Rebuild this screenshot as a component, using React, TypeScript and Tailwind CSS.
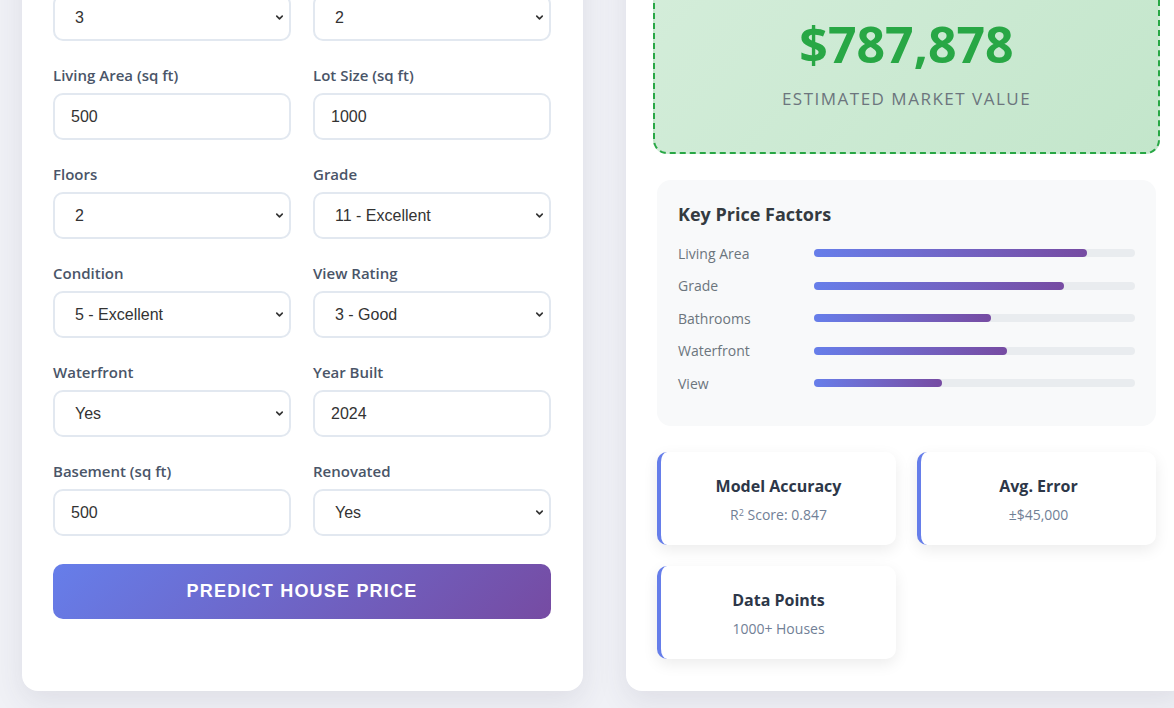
import React from "react";
import { ChevronDown } from "lucide-react";

type Field = {
  label?: string;
  value: string;
  kind: "select" | "input";
};

// first row sits above the fold, only its controls are in view
const rows: Field[][] = [
  [
    { value: "3", kind: "select" },
    { value: "2", kind: "select" },
  ],
  [
    { label: "Living Area (sq ft)", value: "500", kind: "input" },
    { label: "Lot Size (sq ft)", value: "1000", kind: "input" },
  ],
  [
    { label: "Floors", value: "2", kind: "select" },
    { label: "Grade", value: "11 - Excellent", kind: "select" },
  ],
  [
    { label: "Condition", value: "5 - Excellent", kind: "select" },
    { label: "View Rating", value: "3 - Good", kind: "select" },
  ],
  [
    { label: "Waterfront", value: "Yes", kind: "select" },
    { label: "Year Built", value: "2024", kind: "input" },
  ],
  [
    { label: "Basement (sq ft)", value: "500", kind: "input" },
    { label: "Renovated", value: "Yes", kind: "select" },
  ],
];

const factors = [
  { name: "Living Area", pct: 85 },
  { name: "Grade", pct: 78 },
  { name: "Bathrooms", pct: 55 },
  { name: "Waterfront", pct: 60 },
  { name: "View", pct: 40 },
];

const stats = [
  { title: "Model Accuracy", sub: "R² Score: 0.847", sup: true },
  { title: "Avg. Error", sub: "±$45,000", sup: false },
  { title: "Data Points", sub: "1000+ Houses", sup: false },
];

const FormField = ({ field }: { field: Field }) => (
  <div className="flex flex-col mb-[24px]">
    {field.label && (
      <label className="font-['Open_Sans'] font-semibold text-[15px] leading-[20px] text-[#4a5568] mb-[8px]">
        {field.label}
      </label>
    )}
    {field.kind === "input" ? (
      <input
        readOnly
        value={field.value}
        className="h-[47px] w-full rounded-[10px] border-2 border-[#e2e8f0] bg-white pl-[16px] font-['Liberation_Sans'] text-[16px] text-[#333] outline-none"
      />
    ) : (
      <div className="relative">
        <select
          defaultValue={field.value}
          className="h-[47px] w-full appearance-none rounded-[10px] border-2 border-[#e2e8f0] bg-white pl-[20px] font-['Liberation_Sans'] text-[16px] text-[#333] outline-none"
        >
          <option>{field.value}</option>
        </select>
        <ChevronDown
          size={11}
          strokeWidth={3.5}
          className="pointer-events-none absolute right-[6px] top-[18px] text-[#333]"
        />
      </div>
    )}
  </div>
);

export default function App() {
  return (
    <div className="h-[708px] w-[1174px] overflow-hidden bg-[#f0f1f6]">
      <div className="-mt-[66px] flex items-stretch gap-[43px] pl-[22px]">
        {/* Form card */}
        <div className="w-[561px] shrink-0 rounded-[16px] bg-white pl-[31px] pr-[32px] pt-[60px] pb-[70px] shadow-[0_10px_30px_rgba(60,60,90,0.10)]">
          {rows.map((row, i) => (
            <div key={i} className="grid grid-cols-2 gap-x-[22px]">
              {row.map((f, j) => (
                <FormField key={j} field={f} />
              ))}
            </div>
          ))}
          <button className="mt-[4px] h-[55px] w-full rounded-[10px] bg-[linear-gradient(135deg,#667eea_0%,#764ba2_100%)] font-['Liberation_Sans'] text-[18px] font-bold uppercase tracking-[1.2px] text-white">
            Predict House Price
          </button>
        </div>

        {/* Result card */}
        <div className="w-[561px] shrink-0 rounded-[16px] bg-white px-[27px] pt-[31px] pb-[32px] shadow-[0_10px_30px_rgba(60,60,90,0.10)]">
          <div className="flex flex-col items-center rounded-[14px] border-2 border-dashed border-[#28a745] bg-[linear-gradient(135deg,#d4edda_0%,#c3e6cb_100%)] pt-[48px] pb-[41px]">
            <div className="font-['Open_Sans'] text-[50px] font-bold leading-[58px] text-[#28a745]">
              $787,878
            </div>
            <div className="mt-[14px] font-['Open_Sans'] text-[17px] leading-[24px] uppercase tracking-[1.5px] text-[#6c757d]">
              Estimated Market Value
            </div>
          </div>

          <div className="mx-[4px] mt-[26px] rounded-[14px] bg-[#f8f9fa] px-[21px] pt-[22px] pb-[33px]">
            <h3 className="mb-[17px] font-['Open_Sans'] text-[18px] font-bold leading-[24px] text-[#343a40]">
              Key Price Factors
            </h3>
            <div className="flex flex-col gap-[12.5px]">
              {factors.map((f) => (
                <div key={f.name} className="flex h-[20px] items-center">
                  <span className="w-[136px] shrink-0 font-['Open_Sans'] text-[14px] text-[#6c757d]">
                    {f.name}
                  </span>
                  <div className="h-[8px] flex-1 rounded-full bg-[#e9ecef]">
                    <div
                      className="h-full rounded-full bg-gradient-to-r from-[#667eea] to-[#764ba2]"
                      style={{ width: `${f.pct}%` }}
                    />
                  </div>
                </div>
              ))}
            </div>
          </div>

          <div className="mx-[4px] mt-[26px] grid grid-cols-2 gap-[21px]">
            {stats.map((s) => (
              <div
                key={s.title}
                className="flex h-[93px] flex-col items-center rounded-[10px] border-l-4 border-[#667eea] bg-white pt-[23px] shadow-[0_5px_15px_rgba(0,0,0,0.08)]"
              >
                <div className="font-['Open_Sans'] text-[16px] font-bold leading-[22px] text-[#2d3748]">
                  {s.title}
                </div>
                <div className="mt-[8px] font-['Open_Sans'] text-[14px] leading-[20px] text-[#718096]">
                  {s.sup ? (
                    <>
                      R<sup className="text-[9px]">2</sup> Score: 0.847
                    </>
                  ) : (
                    s.sub
                  )}
                </div>
              </div>
            ))}
          </div>
        </div>
      </div>
    </div>
  );
}
